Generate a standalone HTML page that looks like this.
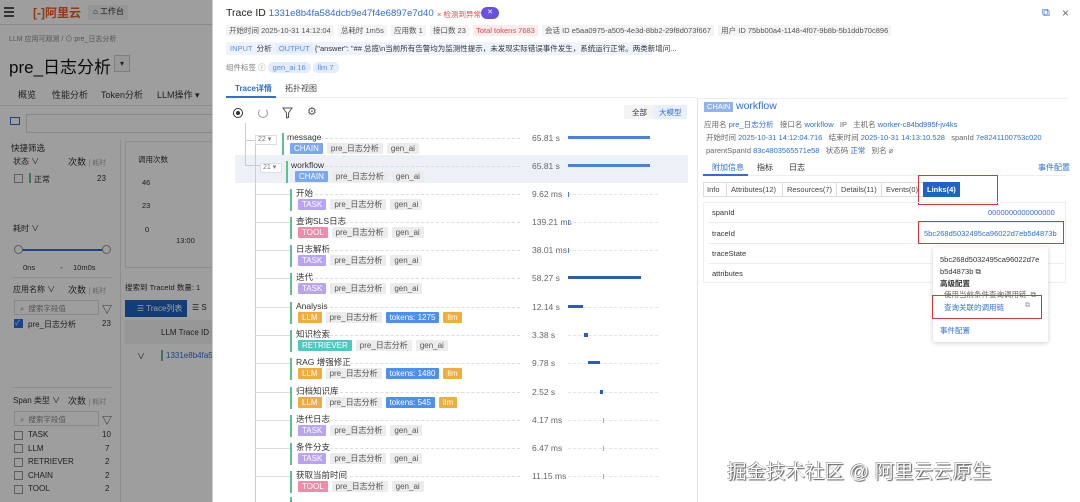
<!DOCTYPE html>
<html style="width:1080px;height:502px;overflow:hidden"><head><meta charset="utf-8">
<style>
*{box-sizing:border-box;margin:0;padding:0}
body{width:1080px;height:502px;overflow:hidden;background:#fff;font-family:"Liberation Sans","Noto Sans CJK SC",sans-serif;color:#333;position:relative;font-size:9px}
.a{position:absolute;white-space:nowrap}
#left{position:absolute;left:0;top:0;width:212px;height:502px;background:#fff;overflow:hidden}
#ov{position:absolute;left:0;top:0;width:212px;height:502px;background:rgba(0,0,0,0.38)}
.cb{position:absolute;width:9px;height:9px;border:1px solid #999;background:#fff}
.tag{display:inline-block;height:11px;line-height:11px;padding:0 4px;font-size:8px;border-radius:1px;margin-right:4px;vertical-align:top}
.g{background:#ececec;color:#555}
.CH{background:#7ba7f0;color:#fff}.TA{background:#b9a4f3;color:#fff}.TO{background:#f08caa;color:#fff}.LL{background:#f0ad3c;color:#fff}.RE{background:#4fc8c0;color:#fff}.TK{background:#4c8ff0;color:#fff}
.row{position:absolute;height:26px}
.nm{position:absolute;top:-1px;font-size:8.5px;line-height:10px;color:#333}
.gb{position:absolute;top:0;width:2px;height:22px;background:#5cc08f}
.tg{position:absolute;top:10px}
.dl{position:absolute;top:5px;border-top:1px dashed #ddd;height:0}
.du{position:absolute;left:532px;font-size:8.5px;color:#666}
.tl{position:absolute;left:568px;width:90px;border-top:1px dashed #e4e4e4;height:0}
.bar{position:absolute;height:3px;background:#4a80e0}
.hc{position:absolute;height:1px;background:#ddd}
.blue{color:#2f6fd6}
.lb{color:#666}
</style></head><body>

<div id="left">
 <div class="a" style="left:0;top:0;width:212px;height:25px;border-bottom:1px solid #ddd"></div>
 <div class="a" style="left:4px;top:7px;width:10px;height:2px;background:#555;box-shadow:0 4px 0 #555,0 8px 0 #555"></div>
 <div class="a" style="left:33px;top:4px;font-size:12px;font-weight:bold;color:#e8601c">[-]阿里云</div>
 <div class="a" style="left:88px;top:5px;width:40px;height:15px;background:#f2f2f2"></div>
 <div class="a" style="left:93px;top:6px;font-size:8px">⌂ 工作台</div>
 <div class="a" style="left:9px;top:34px;font-size:7px;color:#888">LLM 应用可观测 / ⊙ pre_日志分析</div>
 <div class="a" style="left:9px;top:53px;font-size:17px;color:#111">pre_日志分析</div>
 <div class="a" style="left:114px;top:55px;width:16px;height:17px;border:1px solid #ccc;background:#f6f6f6;font-size:8px;text-align:center;line-height:15px">▾</div>
 <div class="a" style="left:18px;top:88px;font-size:9px">概览</div>
 <div class="a" style="left:52px;top:88px;font-size:9px">性能分析</div>
 <div class="a" style="left:101px;top:88px;font-size:9px">Token分析</div>
 <div class="a" style="left:157px;top:88px;font-size:9px">LLM操作 ▾</div>
 <div class="a" style="left:0;top:105px;width:212px;height:1px;background:#e5e5e5"></div>
 <div class="a" style="left:10px;top:117px;width:10px;height:8px;border:1.5px solid #2f6fd6"></div>
 <div class="a" style="left:26px;top:114px;width:190px;height:19px;border:1px solid #ddd"></div>
 <div class="a" style="left:120px;top:140px;width:1px;height:362px;background:#e5e5e5"></div>
 <div class="a" style="left:11px;top:142px;font-size:8.5px">快捷筛选</div>
 <div class="a" style="left:13px;top:156px;font-size:8px">状态 ∨</div>
 <div class="a" style="left:68px;top:155px;font-size:9px">次数 <span style="color:#aaa;font-size:7px">| 耗时</span></div>
 <div class="cb" style="left:14px;top:174px"></div><div class="a" style="left:29px;top:173px;width:2px;height:10px;background:#5cc08f"></div>
 <div class="a" style="left:34px;top:174px;font-size:8px">正常</div><div class="a" style="left:97px;top:174px;font-size:8px">23</div>
 <div class="a" style="left:13px;top:223px;font-size:8px">耗时 ∨</div>
 <div class="a" style="left:19px;top:249px;width:88px;height:2px;background:#2f6fd6"></div>
 <div class="a" style="left:14px;top:245px;width:9px;height:9px;border-radius:50%;border:1px solid #999;background:#fff"></div>
 <div class="a" style="left:102px;top:245px;width:9px;height:9px;border-radius:50%;border:1px solid #999;background:#fff"></div>
 <div class="a" style="left:23px;top:263px;font-size:7.5px">0ns&nbsp;&nbsp;&nbsp;&nbsp;&nbsp;&nbsp;&nbsp;&nbsp;&nbsp;&nbsp;&nbsp;&nbsp;-&nbsp;&nbsp;&nbsp;&nbsp;&nbsp;10m0s</div>
 <div class="a" style="left:12px;top:277px;width:100px;height:1px;background:#e5e5e5"></div>
 <div class="a" style="left:13px;top:284px;font-size:8px">应用名称 ∨</div>
 <div class="a" style="left:68px;top:283px;font-size:9px">次数 <span style="color:#aaa;font-size:7px">| 耗时</span></div>
 <div class="a" style="left:14px;top:300px;width:85px;height:15px;border:1px solid #ddd;font-size:7.5px;color:#888;padding:2px 5px">⌕ &nbsp;搜索字段值</div>
 <div class="a" style="left:102px;top:301px;font-size:10px">▽</div>
 <div class="cb" style="left:14px;top:319px;background:#2f6fd6;border-color:#2f6fd6;color:#fff;font-size:7px;line-height:7px">✓</div>
 <div class="a" style="left:28px;top:319px;font-size:8px">pre_日志分析</div><div class="a" style="left:102px;top:319px;font-size:8px">23</div>
 <div class="a" style="left:12px;top:387px;width:100px;height:1px;background:#e5e5e5"></div>
 <div class="a" style="left:13px;top:395px;font-size:8px">Span 类型 ∨</div>
 <div class="a" style="left:68px;top:394px;font-size:9px">次数 <span style="color:#aaa;font-size:7px">| 耗时</span></div>
 <div class="a" style="left:14px;top:411px;width:85px;height:15px;border:1px solid #ddd;font-size:7.5px;color:#888;padding:2px 5px">⌕ &nbsp;搜索字段值</div>
 <div class="a" style="left:102px;top:412px;font-size:10px">▽</div>
 <div class="cb" style="left:14px;top:431px"></div><div class="a" style="left:28px;top:430px;font-size:8px">TASK</div><div class="a" style="left:102px;top:430px;font-size:8px">10</div>
 <div class="cb" style="left:14px;top:444px"></div><div class="a" style="left:28px;top:444px;font-size:8px">LLM</div><div class="a" style="left:105px;top:444px;font-size:8px">7</div>
 <div class="cb" style="left:14px;top:458px"></div><div class="a" style="left:28px;top:457px;font-size:8px">RETRIEVER</div><div class="a" style="left:105px;top:457px;font-size:8px">2</div>
 <div class="cb" style="left:14px;top:471px"></div><div class="a" style="left:28px;top:471px;font-size:8px">CHAIN</div><div class="a" style="left:105px;top:471px;font-size:8px">2</div>
 <div class="cb" style="left:14px;top:485px"></div><div class="a" style="left:28px;top:484px;font-size:8px">TOOL</div><div class="a" style="left:105px;top:484px;font-size:8px">2</div>
 <div class="a" style="left:125px;top:141px;width:90px;height:127px;border:1px solid #e5e5e5"></div>
 <div class="a" style="left:138px;top:154px;font-size:7.5px">调用次数</div>
 <div class="a" style="left:142px;top:178px;font-size:7.5px">46</div><div class="a" style="left:142px;top:201px;font-size:7.5px">23</div><div class="a" style="left:145px;top:225px;font-size:7.5px">0</div>
 <div class="a" style="left:176px;top:236px;font-size:7.5px">13:00</div>
 <div class="a" style="left:125px;top:282px;font-size:7.5px">搜索到 TraceId 数量: 1</div>
 <div class="a" style="left:125px;top:300px;width:62px;height:17px;background:#1f63c4;color:#fff;font-size:8px;padding:3px 0 0 12px">☰ Trace列表</div>
 <div class="a" style="left:192px;top:303px;font-size:8px">☰ S</div>
 <div class="a" style="left:125px;top:320px;width:90px;height:24px;background:#f2f2f2"></div>
 <div class="a" style="left:161px;top:328px;font-size:8px">LLM Trace ID</div>
 <div class="a" style="left:137px;top:351px;font-size:8px">∨</div>
 <div class="a" style="left:161px;top:350px;width:2px;height:11px;background:#5cc08f"></div>
 <div class="a" style="left:166px;top:351px;font-size:8px;color:#2f6fd6">1331e8b4fa584</div>
 <div id="ov"></div>
</div>
<div class="a" style="left:212px;top:0;width:1px;height:502px;background:#ccc"></div>

<!-- header -->
<div class="a" style="left:226px;top:7px;font-size:10.5px;color:#222">Trace ID <span style="color:#2f6fd6;font-size:9.6px">1331e8b4fa584dcb9e47f4e6897e7d40</span></div>
<div class="a" style="left:437px;top:9px;font-size:7.5px;color:#e0474c">× 检测到异常</div>
<div class="a" style="left:481px;top:7px;width:18px;height:12px;border-radius:6px;background:#6b4fe0;color:#fff;font-size:7px;text-align:center;line-height:12px">✕</div>
<div class="a" style="left:1042px;top:7px;font-size:11px;color:#2f6fd6">⧉</div>
<div class="a" style="left:1062px;top:6px;font-size:12px;color:#666">×</div>
<div class="a" style="left:226px;top:24px;height:13px;line-height:13px;font-size:7.5px;color:#555">
<span style="background:#f4f4f4;padding:1px 3px">开始时间 2025-10-31 14:12:04</span>&nbsp;
<span style="background:#f4f4f4;padding:1px 3px">总耗时 1m5s</span>&nbsp;
<span style="background:#f4f4f4;padding:1px 3px">应用数 1</span>&nbsp;
<span style="background:#f4f4f4;padding:1px 3px">接口数 23</span>&nbsp;
<span style="background:#fdecec;color:#e0474c;padding:1px 3px">Total tokens 7683</span>&nbsp;
<span style="background:#f4f4f4;padding:1px 3px">会话 ID e5aa0975-a505-4e3d-8bb2-29f8d073f667</span>&nbsp;
<span style="background:#f4f4f4;padding:1px 3px">用户 ID 75bb00a4-1148-4f07-9b8b-5b1ddb70c896</span></div>
<div class="a" style="left:226px;top:42px;width:426px;height:13px;background:#eef4fd;font-size:7.5px;line-height:13px;color:#333;padding-left:4px"><span style="color:#5a8ee6">INPUT</span>&nbsp; 分析 &nbsp;<span style="color:#5a8ee6;background:#e2ecfb;padding:0 3px">OUTPUT</span> {"answer": "## 总揽\n当前所有告警均为监测性提示，未发现实际错误事件发生，系统运行正常。两类新增问...</div>
<div class="a" style="left:226px;top:62px;font-size:7.5px;color:#777;line-height:11px">组件标签 ⓘ <span style="background:#e2ecfb;color:#5a8ee6;padding:1px 5px;border-radius:6px">gen_ai 16</span> <span style="background:#e2ecfb;color:#5a8ee6;padding:1px 5px;border-radius:6px">llm 7</span></div>
<div class="a" style="left:235px;top:83px;font-size:8px;color:#2f6fd6;font-weight:bold">Trace详情</div>
<div class="a" style="left:285px;top:83px;font-size:8px;color:#444">拓扑视图</div>
<div class="a" style="left:226px;top:97px;width:470px;height:1px;background:#eee"></div>
<div class="a" style="left:226px;top:96px;width:50px;height:2px;background:#2f6fd6"></div>
<!-- toolbar icons -->
<div class="a" style="left:233px;top:108px;width:10px;height:10px;border:1.3px solid #333;border-radius:50%"></div><div class="a" style="left:236px;top:111px;width:4px;height:4px;background:#333;border-radius:50%"></div>
<div class="a" style="left:258px;top:108px;width:10px;height:10px;border:1.2px solid #999;border-top-color:transparent;border-radius:50%"></div>
<svg class="a" style="left:282px;top:107px" width="11" height="12" viewBox="0 0 11 12"><path d="M1 1h9L6.5 6v4.5L4.5 11V6z" fill="none" stroke="#555" stroke-width="1"/></svg>
<div class="a" style="left:307px;top:105px;font-size:11px;color:#555">⚙</div>
<div class="a" style="left:624px;top:105px;width:63px;height:14px;background:#f4f4f4"></div>
<div class="a" style="left:632px;top:107px;font-size:7.5px">全部</div>
<div class="a" style="left:653px;top:105px;width:34px;height:14px;background:#e8f0fc"></div>
<div class="a" style="left:659px;top:107px;font-size:7.5px;color:#2f6fd6">大模型</div>

<!-- tree -->
<div class="a" style="left:235px;top:155px;width:453px;height:28px;background:#edf1f7"></div>
<div class="a" style="left:245px;top:123px;width:1px;height:42px;background:#ccc"></div>
<div class="a" style="left:245px;top:140px;width:10px;height:1px;background:#ccc"></div>
<div class="a" style="left:255px;top:145px;width:1px;height:357px;background:#ccc"></div>
<div class="a" style="left:245px;top:165px;width:15px;height:1px;background:#ccc"></div>
<div class="a" style="left:255px;top:135px;width:22px;height:10px;border:1px solid #ddd;background:#fff;font-size:7px;color:#777;line-height:8px;padding-left:2px">22 ▾</div>
<div class="a" style="left:260px;top:163px;width:22px;height:10px;border:1px solid #ddd;background:#fff;font-size:7px;color:#777;line-height:8px;padding-left:2px">21 ▾</div>

<div class="row" style="left:0;top:133px;width:700px"><div class="gb" style="left:282px"></div><div class="nm" style="left:287px">message</div><div class="dl" style="left:320px;width:200px"></div><div class="tg" style="left:290px"><span class="tag CH">CHAIN</span><span class="tag g">pre_日志分析</span><span class="tag g">gen_ai</span></div><div class="du">65.81 s</div><div class="bar" style="left:568px;top:3px;width:82px"></div></div>
<div class="row" style="left:0;top:161px;width:700px"><div class="gb" style="left:286px"></div><div class="nm" style="left:291px">workflow</div><div class="dl" style="left:325px;width:195px"></div><div class="tg" style="left:295px"><span class="tag CH">CHAIN</span><span class="tag g">pre_日志分析</span><span class="tag g">gen_ai</span></div><div class="du">65.81 s</div><div class="bar" style="left:568px;top:3px;width:82px"></div></div>

<div class="hc" style="left:255px;top:194px;width:35px"></div>
<div class="row" style="left:0;top:189px;width:700px"><div class="gb" style="left:290px"></div><div class="nm" style="left:296px">开始</div><div class="dl" style="left:315px;width:205px"></div><div class="tg" style="left:298px"><span class="tag TA">TASK</span><span class="tag g">pre_日志分析</span><span class="tag g">gen_ai</span></div><div class="du">9.62 ms</div><div class="tl" style="top:5px"></div><div class="bar" style="left:568px;top:3px;width:1px;height:5px"></div></div>
<div class="hc" style="left:255px;top:222px;width:35px"></div>
<div class="row" style="left:0;top:217px;width:700px"><div class="gb" style="left:290px"></div><div class="nm" style="left:296px">查询SLS日志</div><div class="dl" style="left:345px;width:175px"></div><div class="tg" style="left:298px"><span class="tag TO">TOOL</span><span class="tag g">pre_日志分析</span><span class="tag g">gen_ai</span></div><div class="du">139.21 ms</div><div class="tl" style="top:5px"></div><div class="bar" style="left:568px;top:3px;width:1px;height:5px"></div></div>
<div class="hc" style="left:255px;top:250px;width:35px"></div>
<div class="row" style="left:0;top:245px;width:700px"><div class="gb" style="left:290px"></div><div class="nm" style="left:296px">日志解析</div><div class="dl" style="left:330px;width:190px"></div><div class="tg" style="left:298px"><span class="tag TA">TASK</span><span class="tag g">pre_日志分析</span><span class="tag g">gen_ai</span></div><div class="du">38.01 ms</div><div class="tl" style="top:5px"></div><div class="bar" style="left:568px;top:3px;width:1px;height:5px"></div></div>
<div class="hc" style="left:255px;top:278px;width:35px"></div>
<div class="row" style="left:0;top:273px;width:700px"><div class="gb" style="left:290px"></div><div class="nm" style="left:296px">迭代</div><div class="dl" style="left:315px;width:205px"></div><div class="tg" style="left:298px"><span class="tag TA">TASK</span><span class="tag g">pre_日志分析</span><span class="tag g">gen_ai</span></div><div class="du">58.27 s</div><div class="bar" style="left:568px;top:3px;width:73px;background:#2d5cb0"></div></div>
<div class="hc" style="left:255px;top:307px;width:35px"></div>
<div class="row" style="left:0;top:302px;width:700px"><div class="gb" style="left:290px"></div><div class="nm" style="left:296px">Analysis</div><div class="dl" style="left:330px;width:190px"></div><div class="tg" style="left:298px"><span class="tag LL">LLM</span><span class="tag g">pre_日志分析</span><span class="tag TK">tokens: 1275</span><span class="tag LL">llm</span></div><div class="du">12.14 s</div><div class="tl" style="top:5px"></div><div class="bar" style="left:568px;top:3px;width:15px;background:#2d5cb0"></div></div>
<div class="hc" style="left:255px;top:335px;width:35px"></div>
<div class="row" style="left:0;top:330px;width:700px"><div class="gb" style="left:290px"></div><div class="nm" style="left:296px">知识检索</div><div class="dl" style="left:330px;width:190px"></div><div class="tg" style="left:298px"><span class="tag RE">RETRIEVER</span><span class="tag g">pre_日志分析</span><span class="tag g">gen_ai</span></div><div class="du">3.38 s</div><div class="tl" style="top:5px"></div><div class="bar" style="left:584px;top:3px;width:4px;height:4px;background:#2d5cb0"></div></div>
<div class="hc" style="left:255px;top:363px;width:35px"></div>
<div class="row" style="left:0;top:358px;width:700px"><div class="gb" style="left:290px"></div><div class="nm" style="left:296px">RAG 增强修正</div><div class="dl" style="left:350px;width:170px"></div><div class="tg" style="left:298px"><span class="tag LL">LLM</span><span class="tag g">pre_日志分析</span><span class="tag TK">tokens: 1480</span><span class="tag LL">llm</span></div><div class="du">9.78 s</div><div class="tl" style="top:5px"></div><div class="bar" style="left:588px;top:3px;width:12px;background:#2d5cb0"></div></div>
<div class="hc" style="left:255px;top:392px;width:35px"></div>
<div class="row" style="left:0;top:387px;width:700px"><div class="gb" style="left:290px"></div><div class="nm" style="left:296px">归档知识库</div><div class="dl" style="left:340px;width:180px"></div><div class="tg" style="left:298px"><span class="tag LL">LLM</span><span class="tag g">pre_日志分析</span><span class="tag TK">tokens: 545</span><span class="tag LL">llm</span></div><div class="du">2.52 s</div><div class="tl" style="top:5px"></div><div class="bar" style="left:600px;top:3px;width:3px;height:4px;background:#2d5cb0"></div></div>
<div class="hc" style="left:255px;top:420px;width:35px"></div>
<div class="row" style="left:0;top:415px;width:700px"><div class="gb" style="left:290px"></div><div class="nm" style="left:296px">迭代日志</div><div class="dl" style="left:330px;width:190px"></div><div class="tg" style="left:298px"><span class="tag TA">TASK</span><span class="tag g">pre_日志分析</span><span class="tag g">gen_ai</span></div><div class="du">4.17 ms</div><div class="tl" style="top:5px"></div><div class="bar" style="left:603px;top:3px;width:1px;height:5px;background:#aaa"></div></div>
<div class="hc" style="left:255px;top:448px;width:35px"></div>
<div class="row" style="left:0;top:443px;width:700px"><div class="gb" style="left:290px"></div><div class="nm" style="left:296px">条件分支</div><div class="dl" style="left:330px;width:190px"></div><div class="tg" style="left:298px"><span class="tag TA">TASK</span><span class="tag g">pre_日志分析</span><span class="tag g">gen_ai</span></div><div class="du">6.47 ms</div><div class="tl" style="top:5px"></div><div class="bar" style="left:603px;top:3px;width:1px;height:5px;background:#aaa"></div></div>
<div class="hc" style="left:255px;top:476px;width:35px"></div>
<div class="row" style="left:0;top:471px;width:700px"><div class="gb" style="left:290px"></div><div class="nm" style="left:296px">获取当前时间</div><div class="dl" style="left:345px;width:175px"></div><div class="tg" style="left:298px"><span class="tag TO">TOOL</span><span class="tag g">pre_日志分析</span><span class="tag g">gen_ai</span></div><div class="du">11.15 ms</div><div class="tl" style="top:5px"></div><div class="bar" style="left:603px;top:3px;width:1px;height:5px;background:#aaa"></div></div>
<div class="a" style="left:290px;top:497px;width:2px;height:5px;background:#5cc08f"></div>

<!-- right panel -->
<div class="a" style="left:697px;top:98px;width:1px;height:404px;background:#e5e5e5"></div>
<div class="a" style="left:698px;top:98px;width:370px;height:1px;background:#eee"></div>
<div class="a" style="left:704px;top:102px;height:10px;line-height:10px;padding:0 3px;background:#8fb4f0;color:#fff;font-size:7.5px">CHAIN</div>
<div class="a" style="left:736px;top:100px;font-size:10.5px;color:#2f6fd6">workflow</div>
<div class="a" style="left:704px;top:119px;font-size:7.5px;line-height:11px" ><span class="lb">应用名</span> <span class="blue">pre_日志分析</span> &nbsp; <span class="lb">接口名</span> <span class="blue">workflow</span> &nbsp; <span class="lb">IP</span> &nbsp; <span class="lb">主机名</span> <span class="blue">worker-c84bd995f-jv4ks</span></div>
<div class="a" style="left:706px;top:132px;font-size:7.5px;line-height:11px"><span class="lb">开始时间</span> <span class="blue">2025-10-31 14:12:04.716</span> &nbsp; <span class="lb">结束时间</span> <span class="blue">2025-10-31 14:13:10.528</span> &nbsp; <span class="lb">spanId</span> <span class="blue">7e8241100753c020</span></div>
<div class="a" style="left:706px;top:145px;font-size:7.5px;line-height:11px"><span class="lb">parentSpanId</span> <span class="blue">83c4803565571e58</span> &nbsp; <span class="lb">状态码</span> <span class="blue">正常</span> &nbsp; <span class="lb">别名 ⌀</span></div>
<div class="a" style="left:712px;top:162px;font-size:8px;color:#2f6fd6">附加信息</div>
<div class="a" style="left:757px;top:162px;font-size:8px">指标</div>
<div class="a" style="left:789px;top:162px;font-size:8px">日志</div>
<div class="a" style="left:1038px;top:162px;font-size:8px;color:#2f6fd6">事件配置</div>
<div class="a" style="left:703px;top:175px;width:363px;height:1px;background:#eee"></div>
<div class="a" style="left:703px;top:174px;width:45px;height:2px;background:#2f6fd6"></div>
<div class="a" style="left:703px;top:182px;width:225px;height:15px;border:1px solid #ddd"></div>
<div class="a" style="left:707px;top:185px;font-size:7.5px;color:#444">Info</div>
<div class="a" style="left:726px;top:182px;width:1px;height:15px;background:#ddd"></div>
<div class="a" style="left:731px;top:185px;font-size:7.5px;color:#444">Attributes(12)</div>
<div class="a" style="left:782px;top:182px;width:1px;height:15px;background:#ddd"></div>
<div class="a" style="left:787px;top:185px;font-size:7.5px;color:#444">Resources(7)</div>
<div class="a" style="left:836px;top:182px;width:1px;height:15px;background:#ddd"></div>
<div class="a" style="left:841px;top:185px;font-size:7.5px;color:#444">Details(11)</div>
<div class="a" style="left:881px;top:182px;width:1px;height:15px;background:#ddd"></div>
<div class="a" style="left:886px;top:185px;font-size:7.5px;color:#444">Events(0)</div>
<div class="a" style="left:923px;top:182px;width:37px;height:15px;background:#1f63c4;color:#fff;font-size:7.5px;font-weight:bold;padding:3px 0 0 4px">Links(4)</div>
<div class="a" style="left:918px;top:175px;width:80px;height:30px;border:1.5px solid #d9343a"></div>
<div class="a" style="left:703px;top:202px;width:363px;height:81px;border:1px solid #eee"></div>
<div class="a" style="left:708px;top:222px;width:356px;height:1px;background:#eee"></div>
<div class="a" style="left:708px;top:243px;width:356px;height:1px;background:#eee"></div>
<div class="a" style="left:708px;top:263px;width:356px;height:1px;background:#eee"></div>
<div class="a" style="left:712px;top:208px;font-size:7.5px">spanId</div>
<div class="a" style="left:988px;top:208px;font-size:7.5px;color:#2f6fd6">0000000000000000</div>
<div class="a" style="left:712px;top:229px;font-size:7.5px">traceId</div>
<div class="a" style="left:924px;top:229px;font-size:7.5px;color:#2f6fd6">5bc268d5032495ca96022d7eb5d4873b</div>
<div class="a" style="left:918px;top:221px;width:146px;height:23px;border:1.5px solid #d9343a"></div>
<div class="a" style="left:712px;top:249px;font-size:7.5px">traceState</div>
<div class="a" style="left:712px;top:269px;font-size:7.5px">attributes</div>
<div class="a" style="left:933px;top:247px;width:115px;height:95px;background:#fff;box-shadow:0 1px 5px rgba(0,0,0,0.2);border-radius:2px"></div>
<div class="a" style="left:940px;top:254px;font-size:7.5px;line-height:12px">5bc268d5032495ca96022d7e<br>b5d4873b ⧉</div>
<div class="a" style="left:940px;top:278px;font-size:7.5px;font-weight:bold">高级配置</div>
<div class="a" style="left:944px;top:289px;font-size:7.5px;color:#666">使用当前条件查询调用链 &nbsp;⧉</div>
<div class="a" style="left:944px;top:302px;font-size:7.5px;color:#2f6fd6">查询关联的调用链</div>
<div class="a" style="left:1025px;top:302px;font-size:7px;color:#999">⧉</div>
<div class="a" style="left:932px;top:295px;width:110px;height:24px;border:1.5px solid #d9343a"></div>
<div class="a" style="left:940px;top:325px;font-size:7.5px;color:#2f6fd6">事件配置</div>
<div class="a" style="left:727px;top:455px;font-size:19.5px;color:#fff;text-shadow:1px 1px 1px #555,-0.5px -0.5px 0 #777">掘金技术社区 @ 阿里云云原生</div>
</body></html>
